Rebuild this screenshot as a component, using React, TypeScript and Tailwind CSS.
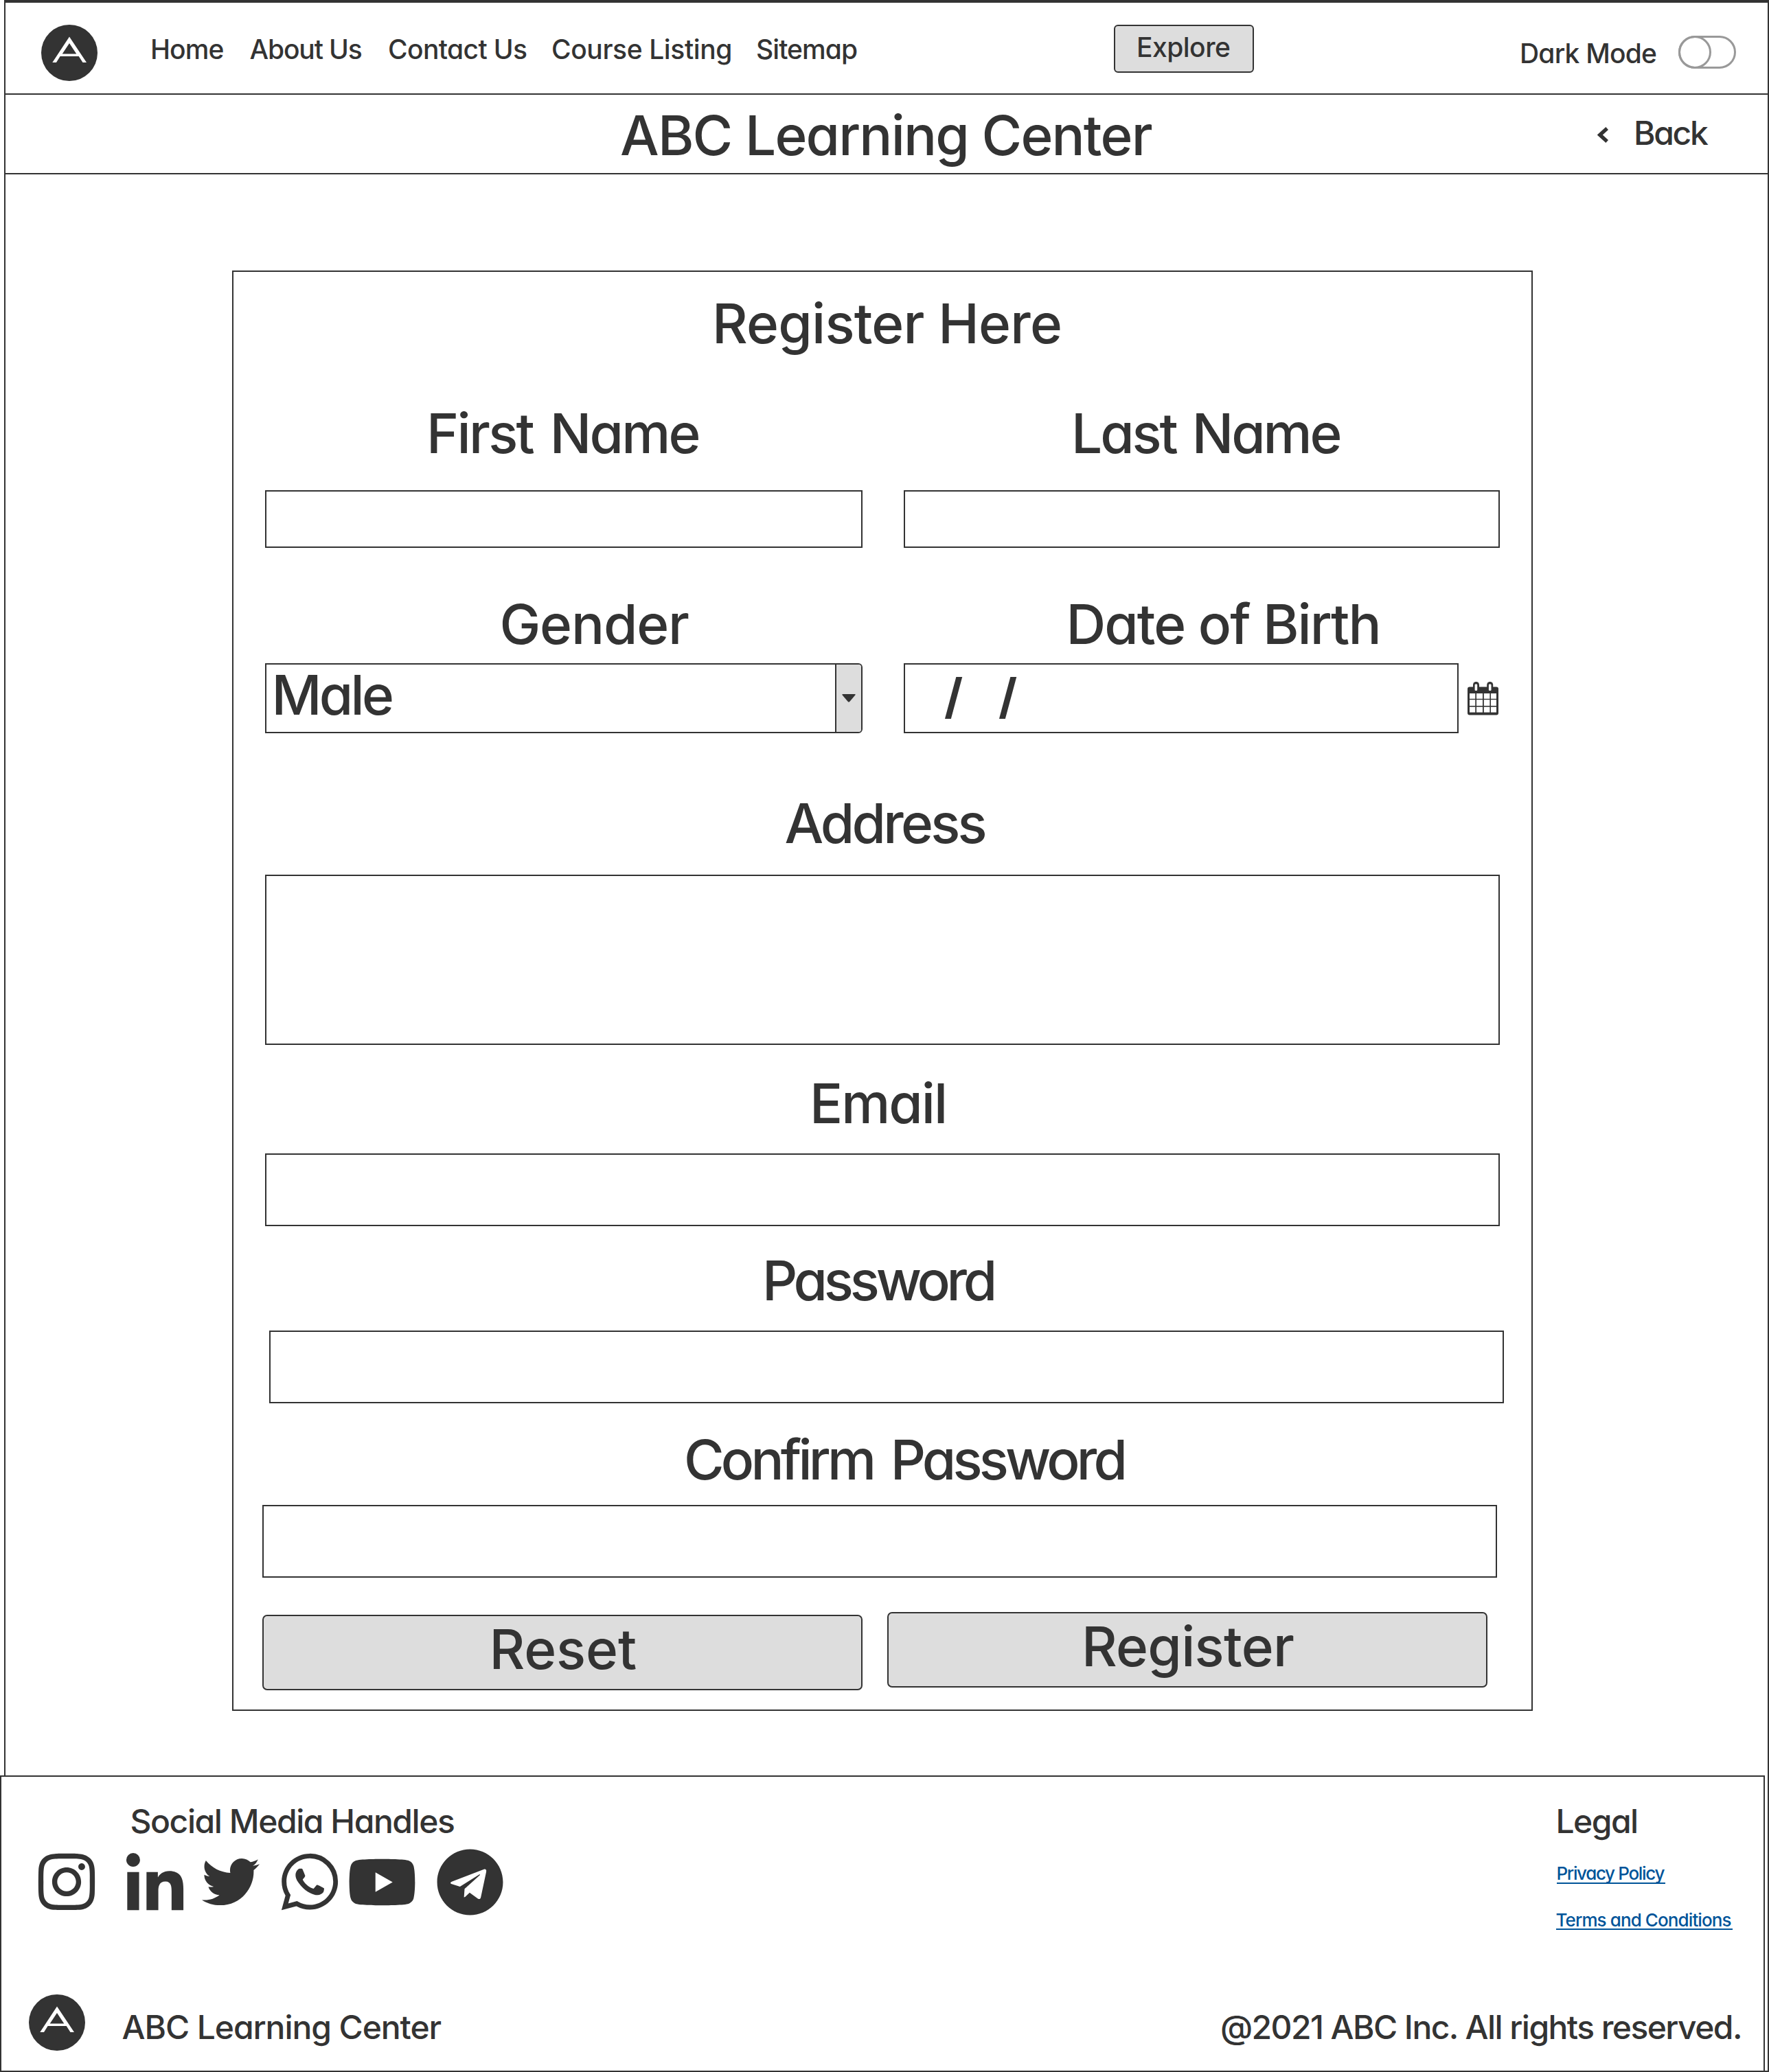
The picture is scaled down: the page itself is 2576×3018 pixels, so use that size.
import type { ReactNode } from "react";
import { FaInstagram, FaLinkedinIn, FaTwitter, FaYoutube, FaTelegram } from "react-icons/fa";
import { IoLogoWhatsapp } from "react-icons/io5";

function Logo() {
  return (
    <svg viewBox="0 0 82 82" className="block h-[82px] w-[82px] shrink-0">
      <circle cx="41" cy="41" r="41" fill="#333333" />
      <path
        fillRule="evenodd"
        fill="#ffffff"
        d="M41 17.5 66 55h-5.5l-5.8-9H27.6L22 55h-5.7ZM41 27 30.7 42.6h20.6Z"
      />
    </svg>
  );
}

function CalendarIcon() {
  const columns = [
    [3, 8.3],
    [13, 9],
    [23.8, 8.6],
    [34, 8],
  ];
  const rows = [
    [17, 7.8],
    [26.2, 8.8],
    [36.6, 8],
  ];
  return (
    <svg viewBox="0 0 45 49" className="block h-[49px] w-[45px] shrink-0">
      <rect x="0" y="7.5" width="45" height="41" rx="3" fill="#333333" />
      <rect x="8" y="0" width="9" height="16" rx="4.5" fill="#333333" />
      <rect x="28.2" y="0" width="9" height="16" rx="4.5" fill="#333333" />
      <rect x="10.6" y="3.5" width="3.6" height="9.4" rx="1.2" fill="#ffffff" />
      <rect x="30.9" y="3.5" width="3.6" height="9.4" rx="1.2" fill="#ffffff" />
      {rows.map(([y, h]) =>
        columns.map(([x, w]) => (
          <rect key={`${x}-${y}`} x={x} y={y} width={w} height={h} fill="#ffffff" />
        )),
      )}
    </svg>
  );
}

function Heading({ className, children }: { className: string; children: ReactNode }) {
  return (
    <div className={`h-20 whitespace-nowrap text-[80px] leading-[82px] ${className}`}>{children}</div>
  );
}

function Header() {
  return (
    <header>
      <div className="flex h-[134px] items-start border-b-2 border-[#333333] pl-[52px] text-[39px] leading-10">
        <div className="mt-[31.5px]">
          <Logo />
        </div>
        <nav className="ml-[77px] mt-[48px] flex whitespace-nowrap">
          <a className="w-[144.5px] tracking-[-0.92px]">Home</a>
          <a className="w-[201.5px] tracking-[-1.16px]">About Us</a>
          <a className="w-[238px] tracking-[-0.62px]">Contact Us</a>
          <a className="w-[298px] tracking-[-0.4px]">Course Listing</a>
          <a className="w-[521px] tracking-[-0.93px]">Sitemap</a>
        </nav>
        <button className="mt-8 h-[70px] w-[204px] rounded-[6px] border-2 border-[#333333] bg-[#dddddd] pb-[15px] pl-[31px] pt-[11px] text-left tracking-[-0.52px]">
          Explore
        </button>
        <span className="ml-[387px] mt-[54px] w-[231px] whitespace-nowrap tracking-[-0.8px]">Dark Mode</span>
        <div className="mt-12 h-12 w-[84px] rounded-full border-[3px] border-[#999999]">
          <div className="-ml-[3px] -mt-[3px] h-12 w-12 rounded-full border-[3px] border-[#999999]" />
        </div>
      </div>
      <div className="flex h-[116px] items-start border-b-2 border-[#333333] pl-[895px]">
        <Heading className="mt-[18px] w-[1423px] tracking-[-1.82px]">ABC Learning Center</Heading>
        <div className="mt-[47px] w-[53px]">
          <svg viewBox="0 0 16 24" className="block h-6 w-4">
            <path d="M14.2 2 3.8 11.5l10.4 9.5" fill="none" stroke="#333333" strokeWidth="5.4" />
          </svg>
        </div>
        <span className="mt-[32px] text-5xl leading-[48px] tracking-[-2.3px]">Back</span>
      </div>
    </header>
  );
}

function RegisterForm() {
  return (
    <form className="ml-[330px] mt-[140px] h-[2098px] w-[1894px] border-2 border-[#333333]">
      <Heading className="ml-[697px] mt-[33.5px] tracking-[-0.77px]">Register Here</Heading>

      <div className="mt-20 flex pl-[281px]">
        <Heading className="w-[939px] tracking-[-2.7px] [word-spacing:6px]">First Name</Heading>
        <Heading className="tracking-[-3.1px] [word-spacing:5px]">Last Name</Heading>
      </div>
      <div className="ml-[46px] mt-[44.5px] flex h-[84px] gap-[60px]">
        <div className="w-[870px] border-2 border-[#333333]" />
        <div className="w-[868px] border-2 border-[#333333]" />
      </div>

      <div className="mt-[70px] flex pl-[387.5px]">
        <Heading className="w-[825px] tracking-[-1.18px]">Gender</Heading>
        <Heading className="tracking-[-1.94px]">Date of Birth</Heading>
      </div>
      <div className="ml-[46px] mt-[18px] flex h-[102px]">
        <div className="flex w-[870px] rounded-r-[6px] border-2 border-[#333333]">
          <Heading className="w-[828px] pl-[7.5px] pt-[3px] tracking-[-3.71px]">Male</Heading>
          <div className="flex flex-1 items-center justify-center rounded-r-[4px] border-l-2 border-[#333333] bg-[#dddddd]">
            <svg viewBox="0 0 20 12" className="block h-3 w-5">
              <path d="M1.5 0h17q2 0 .8 1.6L11.2 11q-1.2 1.2-2.4 0L.7 1.6Q-.5 0 1.5 0Z" fill="#333333" />
            </svg>
          </div>
        </div>
        <div className="ml-[60px] flex w-[808px] border-2 border-[#333333] pl-[57px] pt-[6px] text-[70px] font-bold leading-[80px]">
          <span className="w-[79px]">/</span>
          <span>/</span>
        </div>
        <div className="ml-[13px] mt-[26.5px]">
          <CalendarIcon />
        </div>
      </div>

      <Heading className="ml-[802.5px] mt-[90px] tracking-[-3.75px]">Address</Heading>
      <div className="ml-[46px] mt-9 h-[248px] w-[1798px] border-2 border-[#333333]" />

      <Heading className="ml-[839px] mt-[44px] tracking-[-2px]">Email</Heading>
      <div className="ml-[46px] mt-[34px] h-[106px] w-[1798px] border-2 border-[#333333]" />

      <Heading className="ml-[770px] mt-[38px] tracking-[-5.2px]">Password</Heading>
      <div className="ml-[52px] mt-[34px] h-[106px] w-[1798px] border-2 border-[#333333]" />

      <Heading className="ml-[656px] mt-[41px] tracking-[-4.8px] [word-spacing:9px]">Confirm Password</Heading>
      <div className="ml-[42px] mt-[27px] h-[106px] w-[1798px] border-2 border-[#333333]" />

      <div className="ml-[42px] mt-[50px] flex items-start gap-9">
        <button
          type="button"
          className="mt-1 h-[110px] w-[874px] rounded-[7px] border-2 border-[#333333] bg-[#dddddd] pb-[19.5px] pl-[328.6px] pt-[6.5px] text-left"
        >
          <Heading className="tracking-[-0.11px]">Reset</Heading>
        </button>
        <button
          type="button"
          className="h-[110px] w-[874px] rounded-[7px] border-2 border-[#333333] bg-[#dddddd] pb-[19.5px] pl-[281px] pt-[6.5px] text-left"
        >
          <Heading className="tracking-[-0.71px]">Register</Heading>
        </button>
      </div>
    </form>
  );
}

function Footer() {
  return (
    <footer className="h-[430px] w-[2570px] border-x-2 border-t-2 border-[#333333] text-5xl leading-[48px]">
      <div className="flex h-[317px] items-start whitespace-nowrap">
        <div className="w-[2263.5px] pt-[41px]">
          <div className="ml-[187.5px] h-12 tracking-[-1.44px]">Social Media Handles</div>
          <div className="mt-[14px] flex h-[100px] items-center pl-12">
            <FaInstagram className="h-[94px] w-[94px]" />
            <FaLinkedinIn className="ml-[34px] mt-[11px] h-[95px] w-[95px]" />
            <FaTwitter className="ml-[20.5px] h-[84px] w-[84px]" />
            <IoLogoWhatsapp className="ml-[26.5px] h-[94px] w-[94px]" />
            <FaYoutube className="ml-[7.5px] h-[101px] w-[101px]" />
            <FaTelegram className="ml-[28.5px] h-[99px] w-[99px]" />
          </div>
        </div>
        <div className="pt-[41px]">
          <div className="h-12 tracking-[-1.56px]">Legal</div>
          <a className="ml-px mt-[39px] block h-[28px] w-[158px] border-b-2 border-[#005499] text-[26px] leading-[26px] tracking-[-1.34px] text-[#005499]">
            Privacy Policy
          </a>
          <a className="mt-[40px] block h-[27px] w-[257px] border-b-2 border-[#005499] text-[26px] leading-[26px] tracking-[-0.9px] text-[#005499]">
            Terms and Conditions
          </a>
        </div>
      </div>
      <div className="flex items-start whitespace-nowrap pl-10">
        <Logo />
        <span className="ml-[53.5px] mt-[23.5px] w-[1599.5px] tracking-[-1.08px]">ABC Learning Center</span>
        <span className="mt-[23.5px] tracking-[-1.57px]">@2021 ABC Inc. All rights reserved.</span>
      </div>
    </footer>
  );
}

export default function App() {
  return (
    <div className="flex h-[3018px] w-[2576px] flex-col bg-white font-['Inter',sans-serif] font-medium text-[#333333] [font-feature-settings:'cv11']">
      <div className="ml-[6px] h-[2586px] border-x-2 border-t-4 border-[#333333]">
        <Header />
        <RegisterForm />
      </div>
      <div className="h-[432px] border-b-2 border-r-2 border-[#333333]">
        <Footer />
      </div>
    </div>
  );
}
